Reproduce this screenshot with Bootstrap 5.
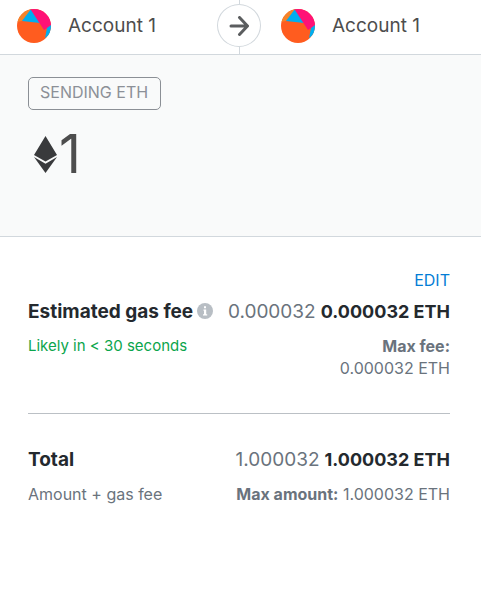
<!DOCTYPE html>
<html lang="en">
<head>
<meta charset="utf-8">
<meta name="viewport" content="width=device-width, initial-scale=1">
<title>Confirm transaction</title>
<link href="https://cdn.jsdelivr.net/npm/bootstrap@5.3.0/dist/css/bootstrap.min.css" rel="stylesheet">
<style>
body { font-family: Inter, "Liberation Sans", sans-serif; font-size: 16px; line-height: 22px; color: #24292e; background: #fff; }
.accounts { border-bottom: 1px solid #d2d8dd; padding-bottom: 3px; }
.party { gap: 17px; font-size: 19px; color: #4d4d4d; }
.party-from { padding-left: 17px; }
.party-to { padding-left: 20px; }
.link-col { width: 44px; }
.tick { width: 1px; background: #d2d8dd; height: 4px; }
.tick-low { height: 7px; margin-bottom: -3px; }
.arrow-ring { width: 44px; height: 43px; border: 1px solid #d2d8dd; background: #fff; }
.summary { background: #f9fafa; border-bottom: 1px solid #d2d8dd; padding: 22px 28px 52px; }
.action-tag { border: 1px solid #8b8f95; border-radius: 5px; color: #8c9097; padding: 3px 12px 6px 11px; }
.amount { font-size: 54px; line-height: 60px; color: #4d4d4d; margin-top: 14px; padding-left: 6px; gap: 2px; }
.details { padding: 32px 31px 0 28px; }
.edit-link { color: #037dd6; }
.fee-line { font-size: 18px; line-height: 26px; margin-top: 8px; }
.fee-name, .fee-plain { font-size: 19px; }
.sub-line { margin-top: 10px; }
.muted { color: #6a737d; }
.likely { color: #0ba54c; font-size: 15px; }
.rule { border-top: 1px solid #bbc0c5; margin-top: 34px; padding-top: 25px; }
</style>
</head>
<body>
<svg width="0" height="0" class="position-absolute" aria-hidden="true">
  <symbol id="avatar" viewBox="0 0 34 34">
    <path fill="#ff5c1f" d="M0 0h34v34H0z"/>
    <path fill="#f5842a" d="M0 0h15L5 12l-5 1z"/>
    <path fill="#00aeef" d="M5 12 14 0l14 20-5-6z"/>
    <path fill="#ff1276" d="M12-2h23v18l-8 5z"/>
    <path fill="#00aeef" d="M34 16l-4 3-2 10 6-4z"/>
  </symbol>
</svg>
<header class="accounts d-flex">
  <div class="party party-from d-flex align-items-center flex-fill">
    <svg class="rounded-circle" width="34" height="34" aria-hidden="true"><use href="#avatar"/></svg><span>Account 1</span>
  </div>
  <div class="link-col d-flex flex-column align-items-center">
    <span class="tick"></span>
    <span class="arrow-ring rounded-circle d-flex align-items-center justify-content-center">
      <svg width="20" height="20" viewBox="0 0 20 20" fill="none" stroke="#5b5d5f" stroke-width="3" stroke-linecap="round" stroke-linejoin="round" aria-hidden="true"><path d="M2 10h16M10.500 1.500 18.500 10l-8 8.500"/></svg>
    </span>
    <span class="tick tick-low"></span>
  </div>
  <div class="party party-to d-flex align-items-center flex-fill">
    <svg class="rounded-circle" width="34" height="34" aria-hidden="true"><use href="#avatar"/></svg><span>Account 1</span>
  </div>
</header>
<main>
  <section class="summary">
    <span class="action-tag d-inline-block">SENDING ETH</span>
    <div class="amount d-flex align-items-center">
      <svg width="23" height="37" viewBox="0 0 23 37" fill="#393a3c" aria-hidden="true"><path d="M11.500 0 23 19 11.500 25.500 0 19zM0 21l11.500 6.800L23 21 11.500 37z"/></svg><span>1</span>
    </div>
  </section>
  <section class="details">
    <div class="text-end"><a href="#" class="edit-link text-decoration-none">EDIT</a></div>
    <div class="fee-line d-flex justify-content-between text-nowrap">
      <div class="d-flex"><strong class="fee-name">Estimated gas fee</strong>
        <svg class="ms-1 mt-1" width="16" height="16" viewBox="0 0 16 16" role="img" aria-label="Information"><circle cx="8" cy="8" r="8" fill="#b8bec4"/><path fill="#fff" d="M6.500 6.500h2.700v4.800h1v1.200H6v-1.200h1V7.700h-.5zM7 3.300h2v2H7z"/></svg>
      </div>
      <div><span class="fee-plain muted">0.000032</span> <strong>0.000032 ETH</strong></div>
    </div>
    <div class="sub-line d-flex justify-content-between">
      <span class="likely">Likely in &lt; 30 seconds</span>
      <div class="muted text-end"><strong class="d-block">Max fee:</strong>0.000032 ETH</div>
    </div>
    <div class="rule">
      <div class="fee-line d-flex justify-content-between">
        <strong class="fee-name">Total</strong>
        <div><span class="fee-plain muted">1.000032</span> <strong>1.000032 ETH</strong></div>
      </div>
      <div class="sub-line d-flex justify-content-between muted">
        <span>Amount + gas fee</span>
        <div><strong>Max amount:</strong> 1.000032 ETH</div>
      </div>
    </div>
  </section>
</main>
<script src="https://cdn.jsdelivr.net/npm/bootstrap@5.3.0/dist/js/bootstrap.bundle.min.js"></script>
</body>
</html>
